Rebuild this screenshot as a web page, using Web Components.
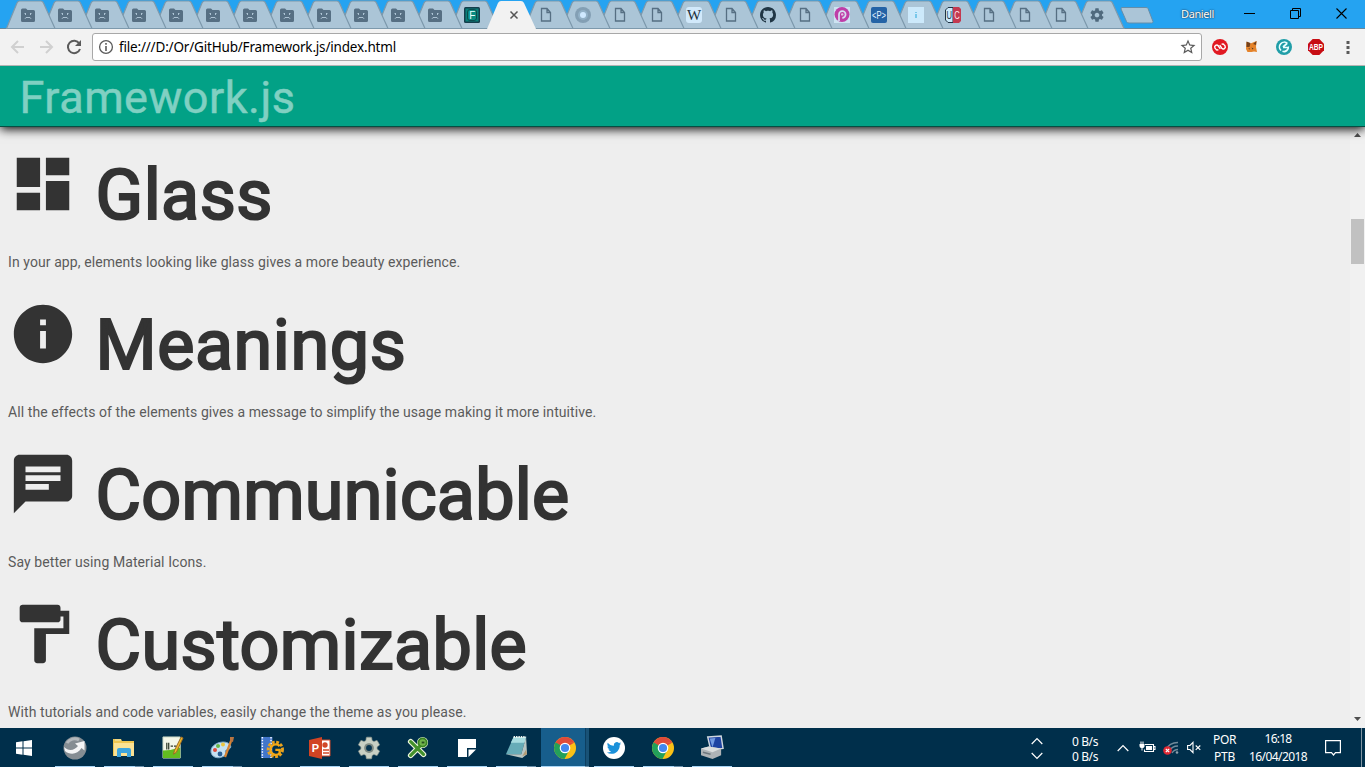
<!DOCTYPE html>
<html lang="en"><head><meta charset="utf-8"><title>Framework.js</title>
<style>
html,body{margin:0;height:100%;overflow:hidden;font-family:Roboto,"Liberation Sans",sans-serif}
</style></head><body>
<desktop-window></desktop-window>
<script>
const doc='<path d="M3.500 1.500h5.500l3.500 4v8.500h-9zM9 1.500v4h3.500" fill="none" stroke="#566f83" stroke-width="1.300"/>';
const chrome='<circle cx="11" cy="11" r="11" fill="#fbc116"/><path d="M11 11L1.5 5.5A11 11 0 0 1 20.5 5.5L11 6z" fill="#e04a3a"/><path d="M11 11L20.5 5.5H11L1.5 5.5z" fill="#e04a3a"/><path d="M1.5 5.5A11 11 0 0 0 10.5 22L15 13.5 11 11z" fill="#23a05a"/><path d="M1.5 5.5L6.6 14 11 11z" fill="#23a05a"/><circle cx="11" cy="11" r="5.3" fill="#fff"/><circle cx="11" cy="11" r="4.1" fill="#4387ef"/>';
const gearPath='<path d="M19.43 12.98c.04-.32.07-.64.07-.98s-.03-.66-.07-.98l2.11-1.65c.19-.15.24-.42.12-.64l-2-3.46c-.12-.22-.39-.3-.61-.22l-2.49 1c-.52-.4-1.08-.73-1.69-.98l-.38-2.65C14.46 2.18 14.25 2 14 2h-4c-.25 0-.46.18-.49.42l-.38 2.65c-.61.25-1.17.59-1.69.98l-2.49-1c-.23-.09-.49 0-.61.22l-2 3.46c-.13.22-.07.49.12.64l2.11 1.65c-.04.32-.07.65-.07.98s.03.66.07.98l-2.11 1.65c-.19.15-.24.42-.12.64l2 3.46c.12.22.39.3.61.22l2.49-1c.52.4 1.08.73 1.69.98l.38 2.65c.03.24.24.42.49.42h4c.25 0 .46-.18.49-.42l.38-2.65c.61-.25 1.17-.59 1.69-.98l2.49 1c.23.09.49 0 .61-.22l2-3.46c.12-.22.07-.49-.12-.64l-2.11-1.65zM12 15.5c-1.93 0-3.5-1.57-3.5-3.5s1.57-3.5 3.5-3.5 3.5 1.57 3.5 3.5-1.57 3.5-3.5 3.5z"/>';
const ICONS={
 sad:['16 16','<path d="M1 3q0-1.500 1.500-1.500H6L7.500 3H13.500q1.500 0 1.500 1.500v9q0 1.500-1.500 1.500h-11Q1 15 1 13.500z" fill="#566f83"/><path d="M5.500 6v2M4.500 6.500h1M10.500 6v2M10.500 6.500h1M5 11.800L6 10.500h4L11 11.800" stroke="#b4cbdb" stroke-width=".9" fill="none"/>'],
 f:['16 16','<rect width="16" height="16" rx="1.500" fill="#143e4c"/><rect x="1.500" y="1.500" width="13" height="13" fill="#087f78"/><rect x="3.500" y="2.500" width="9" height="11" rx="2.500" fill="#088c82" stroke="#0b4c4e"/><text x="8.200" y="11.700" text-anchor="middle" font-family="Liberation Sans" font-size="10" fill="#e7ffff">F</text>'],
 doc:['16 16',doc],
 disc:['16 16','<circle cx="8" cy="8" r="8" fill="#839fb4"/><circle cx="8" cy="8" r="5" fill="#92b1c7"/><circle cx="8" cy="8" r="3" fill="#cfe9ff"/>'],
 wiki:['16 16','<rect width="16" height="16" rx="3" fill="#d1e9fb"/><text x="8" y="13" text-anchor="middle" font-family="Liberation Serif" font-size="15" fill="#202f3c">W</text>'],
 github:['16 16','<path fill="#203645" d="M8 0C3.580 0 0 3.580 0 8c0 3.540 2.290 6.530 5.470 7.590.4.070.55-.17.55-.38 0-.19-.01-.82-.01-1.490-2.010.37-2.530-.49-2.690-.94-.09-.23-.48-.94-.82-1.130-.28-.15-.68-.52-.01-.53.63-.01 1.080.58 1.230.82.72 1.210 1.870.87 2.330.66.070-.52.28-.87.51-1.070-1.780-.2-3.640-.89-3.640-3.950 0-.87.31-1.590.82-2.150-.08-.2-.36-1.020.08-2.120 0 0 .67-.21 2.200.82.64-.18 1.320-.27 2-.27s1.360.09 2 .27c1.530-1.040 2.200-.82 2.200-.82.44 1.100.16 1.920.08 2.120.51.56.82 1.270.82 2.150 0 3.070-1.870 3.750-3.650 3.950.29.25.54.73.54 1.480 0 1.070-.01 1.930-.01 2.200 0 .21.15.46.55.38A8.010 8.010 0 0 0 16 8c0-4.420-3.580-8-8-8z"/>'],
 pink:['16 16','<path d="M0 0h16v16H0z" fill="#cde3f2"/><circle cx="8" cy="7.500" r="7.500" fill="#be3ea8"/><path d="M5 14V7.500a3.300 3.300 0 1 1 3.300 3.300" fill="none" stroke="#d6e0f1" stroke-width="1.700"/><circle cx="8.200" cy="7.400" r="1.200" fill="#e6c3e4"/>'],
 px:['16 16','<rect width="16" height="16" rx="2" fill="#2463a6"/><text x="8" y="11.500" text-anchor="middle" font-family="Liberation Sans" font-size="10.500" textLength="14" lengthAdjust="spacingAndGlyphs" fill="#e3f2ff">&lt;P&gt;</text>'],
 ii:['16 16','<path d="M0 0h16v16H0z" fill="#cce9fb"/><path d="M7 5h2v1H7zm0 2h2v4H7z" fill="#78c7ea"/>'],
 uc:['16 16','<path d="M8 .5H3L.5 3v10L3 15.500h5z" fill="#cce9fb" stroke="#203445"/><path d="M8 0h6l2 2v12l-2 2H8z" fill="#c33950"/><text x="4.300" y="11.500" text-anchor="middle" font-family="Liberation Sans" font-size="10" textLength="5.500" lengthAdjust="spacingAndGlyphs" fill="#203445">U</text><text x="12" y="11.500" text-anchor="middle" font-family="Liberation Sans" font-size="10" textLength="5.500" lengthAdjust="spacingAndGlyphs" fill="#ffe6ee">C</text>'],
 gear:['24 24','<g fill="#506a7e">'+gearPath+'</g>'],
 back:['16 16','<path d="M14 8H2.500M8 2L2 8l6 6" fill="none" stroke="#d0d0d0" stroke-width="2"/>'],
 fwd:['16 16','<path d="M2 8h11.500M8 2l6 6-6 6" fill="none" stroke="#d0d0d0" stroke-width="2"/>'],
 reload:['16 16','<path d="M13.300 4.500A6.200 6.200 0 1 0 14 10" fill="none" stroke="#5a5a5a" stroke-width="2"/><path d="M15 1v6H9z" fill="#5a5a5a"/>'],
 page:['16 16','<circle cx="8" cy="8" r="6.400" fill="none" stroke="#5a5a5a" stroke-width="1.300"/><path d="M7.200 4h1.600v1.700H7.200zm0 3h1.600v5H7.200z" fill="#5a5a5a"/>'],
 star:['24 24','<path fill="#5a5a5a" d="M22 9.240l-7.190-.62L12 2 9.190 8.630 2 9.240l5.460 4.730L5.820 21 12 17.270 18.180 21l-1.630-7.030L22 9.240zM12 15.400l-3.760 2.270 1-4.280-3.320-2.880 4.380-.38L12 6.100l1.710 4.040 4.380.38-3.320 2.880 1 4.280L12 15.400z"/>'],
 authy:['16 16','<circle cx="8" cy="8" r="8" fill="#e11922"/><g transform="rotate(12 8 8)" fill="none" stroke="#fff" stroke-width="1.400"><path d="M8.700 9.800L6 7.200A2 2 0 0 0 3.200 10L4.300 11"/><path d="M7.300 6.200L10 8.800A2 2 0 0 0 12.800 6L11.700 5"/><path d="M4.300 11A2 2 0 0 0 7 11M11.700 5A2 2 0 0 0 9 5"/></g>'],
 fox:['16 16','<path d="M2.500 3l4 1.500 6-2.500-.5 6 1 5-3-.5L7.500 13l-4 0L2 10z" fill="#e5832a"/><path d="M2.500 2.500l4 1.500-1 4L2.500 8zM12.500 2l-.5 4-3-1z" fill="#754019"/><path d="M7.500 8.500l2 1-1 1zM4 9.500h2v1z" fill="#47362a"/>'],
 teal:['16 16','<circle cx="8" cy="8" r="8" fill="#209ea8"/><path d="M5 11.500A4.300 4.300 0 0 1 11.500 4.500M11 4.500L7 8M12.300 7.500A4.300 4.300 0 0 1 6.500 12.200M7 8.500H12" fill="none" stroke="#e8ffff" stroke-width="1.700"/>'],
 abp:['16 16','<path d="M4.700 0h6.600L16 4.700v6.600L11.300 16H4.700L0 11.300V4.700z" fill="#c70d13"/><text x="8" y="11.200" text-anchor="middle" font-family="Liberation Sans" font-weight="bold" font-size="9" textLength="14" lengthAdjust="spacingAndGlyphs" fill="#fff">ABP</text>'],
 dots:['4 16','<path d="M.5 2h3v3h-3zm0 5h3v3h-3zm0 5h3v3h-3z" fill="#5a5a5a"/>'],
 dashboard:['24 24','<path fill="#333" d="M3 13h8V3H3v10zm0 8h8v-6H3v6zm10 0h8V11h-8v10zm0-18v6h8V3h-8z"/>'],
 info:['24 24','<path fill="#333" d="M12 2C6.480 2 2 6.480 2 12s4.480 10 10 10 10-4.480 10-10S17.520 2 12 2zm1 15h-2v-6h2v6zm0-8h-2V7h2v2z"/>'],
 chat:['24 24','<path fill="#333" d="M20 2H4c-1.100 0-1.990.9-1.990 2L2 22l4-4h14c1.100 0 2-.9 2-2V4c0-1.100-.9-2-2-2zM6 9h12v2H6V9zm8 5H6v-2h8v2zm4-6H6V6h12v2z"/>'],
 paint:['24 24','<path fill="#333" d="M18 4V3c0-.55-.45-1-1-1H5c-.55 0-1 .45-1 1v4c0 .55.45 1 1 1h12c.55 0 1-.45 1-1V6h1v4H9v11c0 .55.45 1 1 1h2c.55 0 1-.45 1-1v-9h8V4h-3z"/>'],
 win:['16 16','<path d="M0 2.200L6.500 1.300v6.200H0zM7.500 1.200L16 0v7.500H7.500zM0 8.500h6.500v6.200L0 13.800zM7.500 8.500H16V16l-8.500-1.200z" fill="#fff"/>'],
 swirl:['24 24','<circle cx="12" cy="12" r="11.500" fill="#858d93"/><path d="M1 11c5 5 11 3 14-1l-3-2.500L21.500 5v9.500L18.500 12c-4 7-12 7-16.500 3z" fill="#f4f5f6"/><path d="M4 7a9 9 0 0 1 12-3" stroke="#b3b8bc" stroke-width="3" fill="none"/>'],
 folder:['22 22','<path d="M0 4V2h8l1 2h12v15H0z" fill="#efc650"/><path d="M1 6h20v13H1z" fill="#fbe294"/><path d="M4 20v-7q0-2 2-2h10q2 0 2 2v7h-4v-4H8v4z" fill="#3da5de"/><path d="M2 3h6" stroke="#eee9bc"/>'],
 note:['24 24','<path d="M1 1h18v22H1z" fill="#f4f7e8" stroke="#c7d5c3"/><path d="M1 15q9 0 18-3v11H1z" fill="#62bd20"/><path d="M5 7v7M7 7v7M9 10.500h2.500M12.500 10.500h2.500" stroke="#303b2a" stroke-width="1.300"/><path d="M20 1l2 1-7 15-3 2 1-4z" fill="#eeb829" stroke="#9a6b26"/>'],
 palette:['24 24','<path d="M1 14C2 8 12 4 18 7c6 4 1 7-2 7-2 2 2 4-2 6-6 4-14 1-13-6z" fill="#c6e2f3" stroke="#7ca8c6"/><circle cx="5" cy="14" r="2" fill="#df4a3b"/><circle cx="8" cy="10" r="2" fill="#69b646"/><circle cx="13" cy="8.500" r="2" fill="#edc63e"/><circle cx="10" cy="18" r="2.400" fill="#285e94"/><path d="M21 5l-6 16" stroke="#d88433" stroke-width="2.300"/><path d="M20 5l0-4 4 0-1 5z" fill="#b97542"/>'],
 filmgear:['24 24','<path d="M1 1h12v22H1z" fill="#4276cb"/><path d="M2.500 1v22M11.500 1v22" stroke="#fff" stroke-width="1.500" stroke-dasharray="1.500 1.500"/><circle cx="16" cy="14" r="7.500" fill="none" stroke="#eaa31c" stroke-width="3" stroke-dasharray="2.900 1.600"/><path d="M20.500 10.500A5.500 5.500 0 1 0 20.500 18V14.500H16" fill="none" stroke="#f3a817" stroke-width="2.500"/>'],
 ppt:['22 22','<path d="M12 3h9v16h-9z" fill="#fff" stroke="#d14829"/><path d="M0 3L13 0v22L0 19z" fill="#d14424"/><circle cx="16" cy="8" r="2.700" fill="#d14829"/><path d="M14 13h6M14 16h6" stroke="#d14829" stroke-width="1.300"/><text x="6.500" y="15" text-anchor="middle" font-family="Liberation Sans" font-weight="bold" font-size="11" fill="#fff">P</text>'],
 cog:['24 24','<g fill="#c9d0c4" stroke="#8b968d" stroke-width=".6">'+gearPath+'</g><circle cx="12" cy="12" r="4.500" fill="#7f8a83"/><circle cx="12" cy="12" r="2.700" fill="#063450"/>'],
 xg:['24 24','<g fill="none" stroke-linecap="round"><path d="M4 5l14 14M4 20L15 9" stroke="#ecf5dc" stroke-width="6"/><circle cx="17" cy="6" r="4.500" fill="#ecf5dc" stroke="#ecf5dc" stroke-width="3"/><path d="M4 5l14 14M4 20L15 9" stroke="#43912c" stroke-width="3.500"/><circle cx="17" cy="6" r="4.500" fill="#71b34b" stroke="#398423" stroke-width="2"/></g><path d="M16 5h3v2h-3z" fill="#264d20"/>'],
 sticky:['18 18','<path d="M0 0h18v9h-9v9H0z" fill="#fff"/><path d="M10.500 10.500H18L10.500 18z" fill="#fff"/>'],
 pad:['24 24','<path d="M9 1h13l-5 18H1z" fill="#67acb8"/><path d="M9 1h13l-1.500 6H6z" fill="#a8dce0"/><path d="M1 19h16l5-18 1 18-5 4z" fill="#b8c6c4"/><path d="M9 1h13" stroke="#eef4ef" stroke-width="2" stroke-dasharray="1.500 1"/><path d="M18 21l5-2-1-5z" fill="#b39b75"/>'],
 chrome:['22 22',chrome],
 tweet:['22 22','<circle cx="11" cy="11" r="11" fill="#fff"/><g transform="translate(3.800 3.800) scale(.6)"><path fill="#1b91da" d="M23.950 4.570a10 10 0 0 1-2.820.77 4.960 4.960 0 0 0 2.160-2.720c-.95.56-2 .96-3.130 1.180a4.920 4.920 0 0 0-8.380 4.480C7.690 8.100 4.070 6.130 1.640 3.160a4.820 4.820 0 0 0-.67 2.480c0 1.710.87 3.210 2.190 4.100a4.900 4.900 0 0 1-2.230-.62v.06a4.920 4.920 0 0 0 3.950 4.830 5 5 0 0 1-2.210.08 4.940 4.940 0 0 0 4.600 3.420A9.870 9.870 0 0 1 0 19.540a14 14 0 0 0 7.550 2.210c9.050 0 14-7.500 14-13.990 0-.21 0-.42-.02-.63a9.940 9.940 0 0 0 2.420-2.560z"/></g>'],
 pc:['24 24','<path d="M7 1l14-1 2 13-13 1z" fill="#1e43a2" stroke="#cfd7df" stroke-width="1.500"/><path d="M9 2.500l6-.5-3 10z" fill="#729be1"/><path d="M0 13l8-2 13 2v7l-9 4L0 20z" fill="#aeb3b6"/><path d="M0 13l8-2 13 2-9 4z" fill="#dadddd"/><path d="M2 17l8 2" stroke="#6d777d" stroke-width="1.500"/>'],
 up:['12 8','<path d="M.7 7L6 1.500 11.300 7" fill="none" stroke="#fff" stroke-width="1.200"/>'],
 down:['12 8','<path d="M.7 1L6 6.500 11.300 1" fill="none" stroke="#fff" stroke-width="1.200"/>'],
 battery:['17 13','<path d="M6 3.500h8.500v7h-9v-2M14.500 5.500h1.500v3h-1.500" fill="none" stroke="#fff" stroke-width="1.100"/><path d="M7 5h6v4H7zM.5 3h5v2.500q-.5 1.500-2 1.500v2.500h-1V7Q.5 7 .5 5zM1.500 .5h1V3h-1zm2 0h1V3h-1z" fill="#fff"/>'],
 wifi:['18 14','<g fill="none" stroke="#728b9b" stroke-width="1.300"><path d="M2.500 9A14 14 0 0 1 15 1.500M6 10.500A10 10 0 0 1 15 5M9 12A7 7 0 0 1 15 8.500"/></g><circle cx="14" cy="11.500" r="1.300" fill="#8ca0ad"/><circle cx="4.500" cy="9.500" r="4.300" fill="#df2833"/><path d="M2.800 7.800l3.400 3.400m0-3.400l-3.400 3.400" stroke="#fff" stroke-width="1.200"/>'],
 sound:['15 13','<path d="M.6 4.500H3L6 1.300v10.400L3 8.500H.6z" fill="none" stroke="#fff" stroke-width="1.100"/><path d="M8.700 4.500l4.600 4.400m0-4.400L8.700 8.900" stroke="#fff" stroke-width="1.100"/>'],
 msg:['16 16','<path d="M.6.6h14.800v12H10.500L8.500 15l-2-2.400H.6z" fill="none" stroke="#fff" stroke-width="1.200"/>'],
 min:['11 11','<path d="M0 5.500h11" stroke="#000"/>'],
 rest:['11 11','<path d="M.5 2.500h8v8h-8zM2.500 2.500v-2h8v8h-2" fill="none" stroke="#000"/>'],
 close:['11 11','<path d="M.5.5l10 10m0-10l-10 10" stroke="#000" stroke-width="1.100"/>'],
 x:['10 10','<path d="M1.500 1.500l7 7m0-7l-7 7" stroke="#555" stroke-width="1.500"/>']
};
function el(name,html,after){
 customElements.define(name,class extends HTMLElement{
  constructor(){super();this.attachShadow({mode:'open'});}
  connectedCallback(){this.shadowRoot.innerHTML=typeof html==='function'?html(this):html;if(after)after(this);}
 });
}
el('ui-icon',h=>{const [b,s]=ICONS[h.getAttribute('name')];const w=h.getAttribute('w')||16,t=h.getAttribute('h')||w;
 return `<style>:host{display:block;flex:none;width:${w}px;height:${t}px}svg{display:block;overflow:visible}</style><svg width="${w}" height="${t}" viewBox="0 0 ${b}">${s}</svg>`});
/* Text tracked so that it fills a given width */
el('fit-text','<style>:host{display:block;white-space:nowrap;flex:none}span{display:inline-block}</style><span><slot></slot></span>',h=>{
 const s=h.shadowRoot.querySelector('span'),w=+h.getAttribute('w');h.style.width=w+'px';
 const n=h.textContent.length;s.style.letterSpacing=((w-s.getBoundingClientRect().width)/n)+'px';});
el('browser-tab',h=>{const a=h.hasAttribute('active');return `<style>:host{display:grid;position:relative;flex:none;width:${h.getAttribute('w')||37}px;height:29px}
 svg{grid-area:1/1;overflow:visible}.i{grid-area:1/1;padding:${a?'10px 0 0 21px':'7px 0 0 13px'};z-index:1}</style>
 <svg width="37" height="29"><path d="${a?'M-1 29L10 3Q11 1 13 1H33Q35 1 36 3L48 29z':'M-.5 28.500L10 3Q11 1 12.500 1H34Q35.500 1 36.500 3L48 28.500z'}" fill="${a?'#f2f2f2':'#abc5d7'}" ${a?'':'stroke="#7d99ac" stroke-width="1.200"'}/></svg>
 <div class="i"><slot></slot></div>`});
el('tab-strip',()=>{const names=[...Array(12).fill('sad'),'f','active','doc','disc','doc','doc','wiki','doc','github','doc','pink','px','ii','uc','doc','doc','doc','gear'];
 return `<style>:host{display:flex;height:29px;background:#25a3f1;padding-left:7px;box-sizing:border-box;box-shadow:inset 0 -1px #66879c;overflow:hidden}
 .new{flex:none;width:36px;height:29px;margin-left:7px}.name{margin:6px 0 0 26px;font:11px/15px "Noto Sans",sans-serif;color:#fff;text-shadow:0 0 2px #234,0 0 1px #234}
 .w{display:flex;gap:35px;margin-left:30px;padding-top:8px}</style>`+
 names.map((n,i)=>n==='active'?`<browser-tab active style="z-index:50"><ui-icon name="x" w="10"></ui-icon></browser-tab>`:
 `<browser-tab style="z-index:${40-i}" w="${i>=25?36:37}"><ui-icon name="${n}" w="16"></ui-icon></browser-tab>`).join('')+
 `<svg class="new" viewBox="0 0 36 29"><path d="M3 7.500h24q1.500 0 2 1l5 13q0 1.500-1.500 1.500H10q-2 0-2.500-1.500L2 9q-.3-1.500 1-1.500z" fill="#abc5d7" stroke="#658eaa"/></svg>
 <fit-text class="name" w="33">Daniell</fit-text><div class="w"><ui-icon name="min" w="11"></ui-icon><ui-icon name="rest" w="11"></ui-icon><ui-icon name="close" w="11"></ui-icon></div>`});
el('nav-bar',`<style>:host{display:flex;align-items:center;height:37px;box-sizing:border-box;background:#f2f2f2;border-bottom:1px solid #b4b4b4;padding:0 15px 0 10px}
 .b{display:flex;gap:12px;margin-right:10px}.o{display:flex;align-items:center;width:1110px;height:28px;box-sizing:border-box;border:1px solid #a8a8a8;border-radius:3px;background:#fff;padding:0 5px;font:13.500px/20px "Noto Sans",sans-serif;color:#000}
 .o fit-text{margin-left:5px}.s{margin:0 -1px 0 auto}.e{display:flex;gap:16px;align-items:center;margin-left:10px}</style>
 <div class="b"><ui-icon name="back"></ui-icon><ui-icon name="fwd"></ui-icon><ui-icon name="reload"></ui-icon></div>
 <div class="o"><ui-icon name="page"></ui-icon><fit-text w="277">file:///D:/Or/GitHub/Framework.js/index.html</fit-text><ui-icon class="s" name="star" w="18"></ui-icon></div>
 <div class="e"><ui-icon name="authy"></ui-icon><ui-icon name="fox"></ui-icon><ui-icon name="teal"></ui-icon><ui-icon name="abp"></ui-icon><ui-icon name="dots" w="4" h="16" style="margin-left:6px"></ui-icon></div>`);
el('app-bar',`<style>:host{display:block;height:61px;box-sizing:border-box;background:#02a186;border-bottom:1px solid #064e43;box-shadow:0 2px 10px #000;clip-path:inset(0 0 -20px 0);position:relative;z-index:2;padding:5px 0 0 19.500px;font:45px/54px Roboto,sans-serif;letter-spacing:.5px;color:#80d0c2;-webkit-text-stroke:.5px #80d0c2}</style><slot></slot>`);
el('feature-item',h=>`<style>:host{display:block;height:150px}.r{display:flex;height:105px}h1{margin:4px 0 0 17.500px;font:400 70px/84px Roboto,sans-serif;letter-spacing:${h.getAttribute('track')}px;color:#333;-webkit-text-stroke:2.200px #333}p{margin:0;font:14px/16px Roboto,sans-serif;letter-spacing:.087px;color:#5b5b5b}</style>
 <div class="r"><ui-icon name="${h.getAttribute('icon')}" w="70"></ui-icon><h1>${h.getAttribute('heading')}</h1></div><p><slot></slot></p>`);
el('scroll-bar',`<style>:host{display:flex;flex-direction:column;justify-content:space-between;width:15px;background:#f1f1f1;padding:6px 0 7px;box-sizing:border-box}svg{display:block;margin-left:4px;flex:none}.t{width:13px;height:45px;background:#c1c1c1;margin:82px 0 auto 1px}</style>
 <svg width="7" height="4"><path d="M0 4L3.500 0 7 4z" fill="#505050"/></svg><div class="t"></div><svg width="7" height="4"><path d="M0 0h7L3.500 4z" fill="#505050"/></svg>`);
el('task-button',h=>{const k=h.getAttribute('kind')||'';return `<style>:host{display:flex;flex:none;width:49px;height:39px;position:relative;align-items:center;justify-content:center;box-sizing:border-box;padding-right:1px}
 :host([kind~=active]){background:linear-gradient(90deg,#175e8c 0 44px,#0c3f61 44px 45px,#195276 45px 48px,transparent 48px)}
 i{position:absolute;bottom:0;left:${k==='active'?0:4}px;width:${k==='active'?48:40}px;height:1px;background:${k==='multi'||k==='active'?'linear-gradient(90deg,#a8d5f5 0 '+(k==='active'?44:31)+'px,#6d93ae 0)':'#a8d5f5'}}</style><slot></slot>${k==='none'?'':'<i></i>'}`});
el('task-bar',()=>{const t=[['swirl',24,''],['folder',22,'multi'],['note',23,''],['palette',24,'multi'],['filmgear',23,'none'],['ppt',22,''],['cog',26,''],['xg',22,''],['sticky',18,''],['pad',23,'multi'],['chrome',22,'active'],['tweet',22,''],['chrome',22,'multi'],['pc',23,'']];
 return `<style>:host{display:flex;height:39px;background:#002f4b;color:#fff;font:12px/15px "Noto Sans",sans-serif;align-items:center}
 .start{margin:0 19px 0 16px}.tray{display:flex;align-items:center;margin-left:294px;height:39px}.a{display:grid;gap:7px;margin:2px 29px 0 0}.n{padding-top:2px}.c{display:grid;justify-items:center;line-height:17px}.end{align-self:stretch;width:3px;border-left:1px solid #8094a2;margin-left:20px}</style>
 <ui-icon class="start" name="win" w="16"></ui-icon>`+t.map(x=>`<task-button kind="${x[2]}"><ui-icon name="${x[0]}" w="${x[1]}"></ui-icon></task-button>`).join('')+
 `<div class="tray"><div class="a"><ui-icon name="up" w="12" h="8"></ui-icon><ui-icon name="down" w="12" h="8"></ui-icon></div><div class="n"><fit-text w="26">0 B/s</fit-text><fit-text w="26">0 B/s</fit-text></div>
 <ui-icon name="up" w="12" h="8" style="margin-left:19px"></ui-icon><ui-icon name="battery" w="17" h="13" style="margin-left:10px"></ui-icon><ui-icon name="wifi" w="18" h="14" style="margin-left:7px"></ui-icon><ui-icon name="sound" w="15" h="13" style="margin-left:6px"></ui-icon>
 <div class="c" style="margin-left:11px"><fit-text w="23">POR</fit-text><fit-text w="21">PTB</fit-text></div><div class="c" style="margin-left:13px;line-height:18px"><fit-text w="27">16:18</fit-text><fit-text w="58">16/04/2018</fit-text></div>
 <ui-icon name="msg" w="16" style="margin-left:18px"></ui-icon><div class="end"></div></div>`});
el('desktop-window',`<style>:host{display:grid;grid-template:29px 37px 61px 601px 39px / 1365px;height:767px;width:1365px;overflow:hidden;background:#eee}
 .v{display:grid;grid-template-columns:1350px 15px;overflow:hidden}.m{padding:22px 8px 0;height:579px;overflow:hidden}</style>
 <tab-strip></tab-strip><nav-bar></nav-bar><app-bar>Framework.js</app-bar>
 <div class="v"><div class="m">
 <feature-item icon="dashboard" heading="Glass" track=".45">In your app, elements looking like glass gives a more beauty experience.</feature-item>
 <feature-item icon="info" heading="Meanings" track=".6">All the effects of the elements gives a message to simplify the usage making it more intuitive.</feature-item>
 <feature-item icon="chat" heading="Communicable" track=".27">Say better using Material Icons.</feature-item>
 <feature-item icon="paint" heading="Customizable" track=".37">With tutorials and code variables, easily change the theme as you please.</feature-item>
 </div><scroll-bar></scroll-bar></div><task-bar></task-bar>`);
</script></body></html>
